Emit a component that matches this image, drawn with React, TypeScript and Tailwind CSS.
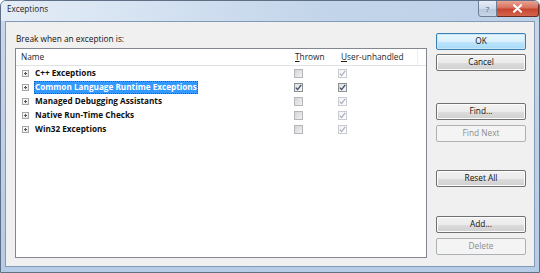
import React from "react";

const FONT = "font-['Open_Sans','Noto_Sans',sans-serif]";

function Check({ faded }: { faded?: boolean }) {
  return (
    <svg width="7" height="7" viewBox="0 0 7 7" className="block">
      <path
        d="M0.8 3.6 L2.6 5.6 L6.2 0.9"
        fill="none"
        stroke={faded ? "#a8b0bb" : "#3a4a6b"}
        strokeWidth="1.3"
      />
    </svg>
  );
}

function Box({ checked, faded }: { checked?: boolean; faded?: boolean }) {
  return (
    <div
      className={
        "w-[9px] h-[9px] border flex items-center justify-center " +
        (faded
          ? "border-[#c8ccd2] bg-[linear-gradient(135deg,#f2f2f2,#ffffff)]"
          : checked
          ? "border-[#8e8f8f] bg-[linear-gradient(135deg,#dcdee2,#f8f8f8)]"
          : "border-[#b4b6b9] bg-[linear-gradient(135deg,#d4d5d7,#f0f0f0)]")
      }
    >
      {checked && <Check faded={faded} />}
    </div>
  );
}

function Plus() {
  return (
    <div className="w-[7px] h-[7px] border border-[#a6a6a6] bg-[linear-gradient(135deg,#ffffff,#e4e4e4)] flex items-center justify-center relative">
      <div className="w-[3px] h-px bg-[#555]" />
      <div className="absolute w-px h-[3px] bg-[#555]" />
    </div>
  );
}

function Row({
  name,
  selected,
  thrown,
}: {
  name: string;
  selected?: boolean;
  thrown?: boolean;
}) {
  return (
    <div className="h-[14px] flex items-center">
      <div className="w-[274px] flex items-center pl-[6px] h-full">
        <Plus />
        <div
          className={
            "ml-[5px] px-[1px] h-[13px] flex items-center font-bold text-[8.2px] leading-none " +
            (selected
              ? "bg-[#3399ff] text-white outline-1 outline-dotted outline-[#1a5fb0] -outline-offset-1"
              : "text-[#111]")
          }
        >
          {name}
        </div>
      </div>
      <div className="w-[46px] pl-[4px]">
        <Box checked={thrown} />
      </div>
      <div className="pl-[2px]">
        <Box checked faded={!thrown} />
      </div>
    </div>
  );
}

function Btn({
  label,
  variant = "normal",
  className = "",
}: {
  label: string;
  variant?: "default" | "normal" | "disabled";
  className?: string;
}) {
  const base =
    "w-[90px] h-[17px] rounded-[2px] border flex items-center justify-center text-[8.3px] leading-none ";
  const v =
    variant === "default"
      ? "border-[#3c7fb1] bg-[linear-gradient(#eaf6fd_0%,#d9f0fc_50%,#bee6fd_51%,#a7d9f5_100%)] text-[#111] shadow-[inset_0_0_0_1px_#c7e7f8]"
      : variant === "disabled"
      ? "border-[#adb2b5] bg-[#f4f4f4] text-[#8c8c8c]"
      : "border-[#707070] bg-[linear-gradient(#f2f2f2_0%,#ebebeb_50%,#dddddd_51%,#cfcfcf_100%)] text-[#111] shadow-[inset_0_0_0_1px_#fcfcfc]";
  return <div className={base + v + " " + className}>{label}</div>;
}

export default function App() {
  return (
    <div
      className={
        FONT +
        " w-[540px] h-[273px] flex flex-col border border-[#5f7086] rounded-t-[6px] bg-[linear-gradient(180deg,#c9d9ec_0%,#bfd2e9_40%,#b6cbe5_100%)] overflow-hidden"
      }
    >
      <div className="h-[20px] flex items-start justify-between relative bg-[linear-gradient(90deg,#e4edf7_0%,#d3e1f1_30%,#c3d5ea_60%,#bcd0e8_100%)]">
        <div className="pl-[6px] pt-[4px] text-[8.2px] leading-none text-[#1e1e1e]">
          Exceptions
        </div>
        <div className="flex -mt-px">
          <div className="w-[19px] h-[17px] border border-[#6d7d92] rounded-bl-[3px] bg-[linear-gradient(#e6edf6_0%,#cfdbea_50%,#b8c9de_51%,#c6d5e7_100%)] flex items-center justify-center text-[8px] text-[#4a5a70]">
            ?
          </div>
          <div className="w-[42px] h-[17px] border border-l-0 border-[#6a2b22] rounded-br-[3px] bg-[linear-gradient(#e8a493_0%,#d7715d_45%,#c8452f_55%,#d4654e_100%)] flex items-center justify-center">
            <svg width="11" height="9" viewBox="0 0 11 9">
              <path
                d="M2 1.2 L9 7.8 M9 1.2 L2 7.8"
                stroke="#ffffff"
                strokeWidth="2.1"
                strokeLinecap="round"
              />
            </svg>
          </div>
        </div>
      </div>
      <div className="flex-1 mx-[4px] mb-[5px] border border-[#8499b3] bg-[#f0f0f0] flex">
        <div className="pl-[9px] w-[421px] flex flex-col">
          <div className="mt-[9px] h-[17px] flex items-center pl-[1px] text-[8.3px] leading-none text-[#111]">
            Break when an exception is:
          </div>
          <div className="h-[210px] border border-[#828790] bg-white flex flex-col">
            <div className="h-[17px] border-b border-[#e0e2e5] flex items-center text-[8.3px] leading-none text-[#1e1e1e]">
              <div className="w-[274px] pl-[5px]">Name</div>
              <div className="w-[46px] pl-[5px]">
                <span className="underline underline-offset-1">T</span>hrown
              </div>
              <div className="w-[82px] pl-[5px] h-full flex items-center border-r border-[#eceef1]">
                <span className="underline underline-offset-1">U</span>ser-unhandled
              </div>
            </div>
            <Row name="C++ Exceptions" />
            <Row name="Common Language Runtime Exceptions" selected thrown />
            <Row name="Managed Debugging Assistants" />
            <Row name="Native Run-Time Checks" />
            <Row name="Win32 Exceptions" />
          </div>
        </div>
        <div className="ml-[9px] flex flex-col">
          <Btn label="OK" variant="default" className="mt-[11px]" />
          <Btn label="Cancel" className="mt-[4px]" />
          <Btn label="Find..." className="mt-[32px]" />
          <Btn label="Find Next" variant="disabled" className="mt-[5px]" />
          <Btn label="Reset All" className="mt-[28px]" />
          <Btn label="Add..." className="mt-[29px]" />
          <Btn label="Delete" variant="disabled" className="mt-[5px]" />
        </div>
      </div>
    </div>
  );
}
